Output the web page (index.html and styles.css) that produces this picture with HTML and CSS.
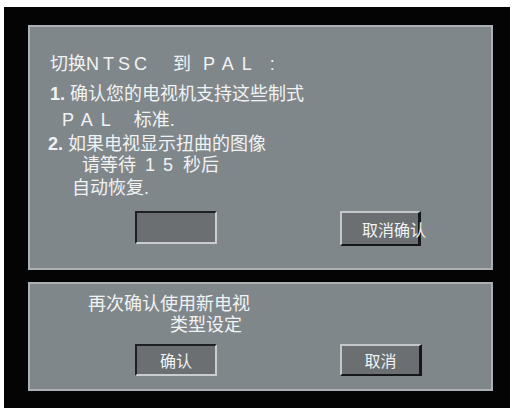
FILE: index.html
```html
<!DOCTYPE html>
<html lang="zh">
<head>
<meta charset="utf-8">
<link rel="stylesheet" href="styles.css">
</head>
<body>
<div class="frame">
  <section class="panel top">
    <div class="line l1">切换<span class="lat sp4">NTSC</span><span class="gap22">到</span><span class="lat sp8 gap12">PAL</span><span class="gap10">:</span></div>
    <div class="line l2"><span class="num">1.</span> 确认您的电视机支持这些制式</div>
    <div class="line l3"><span class="lat sp8">PAL</span><span class="gap15">标准.</span></div>
    <div class="line l4"><span class="num">2.</span> 如果电视显示扭曲的图像</div>
    <div class="line l5">请等待<span class="lat sp8 gap9">15</span><span class="gap2">秒后</span></div>
    <div class="line l6">自动恢复.</div>
    <div class="row row-top">
      <div class="btn sunken empty"></div>
      <div class="btn raised wide"><span class="label">取消确认</span></div>
    </div>
  </section>
  <section class="panel bottom">
    <div class="line b1">再次确认使用新电视</div>
    <div class="line b2">类型设定</div>
    <div class="row row-bottom">
      <div class="btn sunken"><span class="label">确认</span></div>
      <div class="btn raised"><span class="label">取消</span></div>
    </div>
  </section>
</div>
</body>
</html>
```

FILE: styles.css
```css
html, body {
  margin: 0;
  padding: 0;
  background: #ffffff;
}
body {
  width: 518px;
  height: 412px;
  overflow: hidden;
  font-family: "Liberation Sans", "Noto Sans CJK SC", sans-serif;
  color: #f1f3f3;
}
.frame {
  margin: 7px 0 0 4px;
  width: 506px;
  height: 401px;
  box-sizing: border-box;
  background: #040404;
  padding: 18px 17px 0 24px;
  display: flex;
  flex-direction: column;
  gap: 12px;
}
.panel {
  box-sizing: border-box;
  width: 465px;
  background: #80878b;
  border: 2px solid #aab0b3;
}
.panel.top {
  height: 245px;
  padding-top: 26px;
}
.panel.bottom {
  height: 109px;
  padding-top: 9px;
}
.line {
  font-size: 18px;
  line-height: 22px;
  height: 22px;
  white-space: nowrap;
  font-family: "Liberation Sans", "Noto Sans CJK SC", sans-serif;
}
.lat {
  display: inline-block;
}
.sp4 { letter-spacing: 4px; }
.sp8 { letter-spacing: 8px; }
.gap22 { margin-left: 22px; }
.gap12 { margin-left: 12px; }
.gap15 { margin-left: 15px; }
.gap10 { margin-left: 10px; }
.gap9 { margin-left: 9px; }
.gap2 { margin-left: 2px; }
.num {
  font-weight: bold;
}
.l1 { padding-left: 20px; }
.l2 { padding-left: 20px; margin-top: 8px; }
.l3 { padding-left: 32px; margin-top: 4px; }
.l4 { padding-left: 18px; margin-top: 2px; }
.l5 { padding-left: 52px; margin-top: -1px; }
.l6 { padding-left: 42px; margin-top: 1px; }
.b1 { padding-left: 58px; }
.b2 { padding-left: 140px; margin-top: -1px; }
.row {
  display: flex;
  padding-left: 105px;
  gap: 123px;
}
.row-top {
  margin-top: 12px;
  align-items: flex-start;
}
.row-bottom {
  margin-top: 8px;
}
.btn {
  box-sizing: border-box;
  width: 82px;
  height: 32px;
  background: #6b6f72;
  border: 2px solid;
  display: flex;
  align-items: center;
  justify-content: center;
  font-family: "Noto Sans CJK SC", sans-serif;
  font-size: 16px;
}
.sunken {
  border-color: #1d2124 #c9cdcf #c9cdcf #1d2124;
}
.raised {
  border-color: #c3c7c9 #16191b #16191b #c3c7c9;
  border-right-width: 3px;
}
.empty {
  height: 33px;
}
.wide {
  width: 81px;
  height: 35px;
  justify-content: flex-start;
  padding-left: 20px;
  overflow: visible;
}
.label {
  white-space: nowrap;
  line-height: 20px;
}
```
